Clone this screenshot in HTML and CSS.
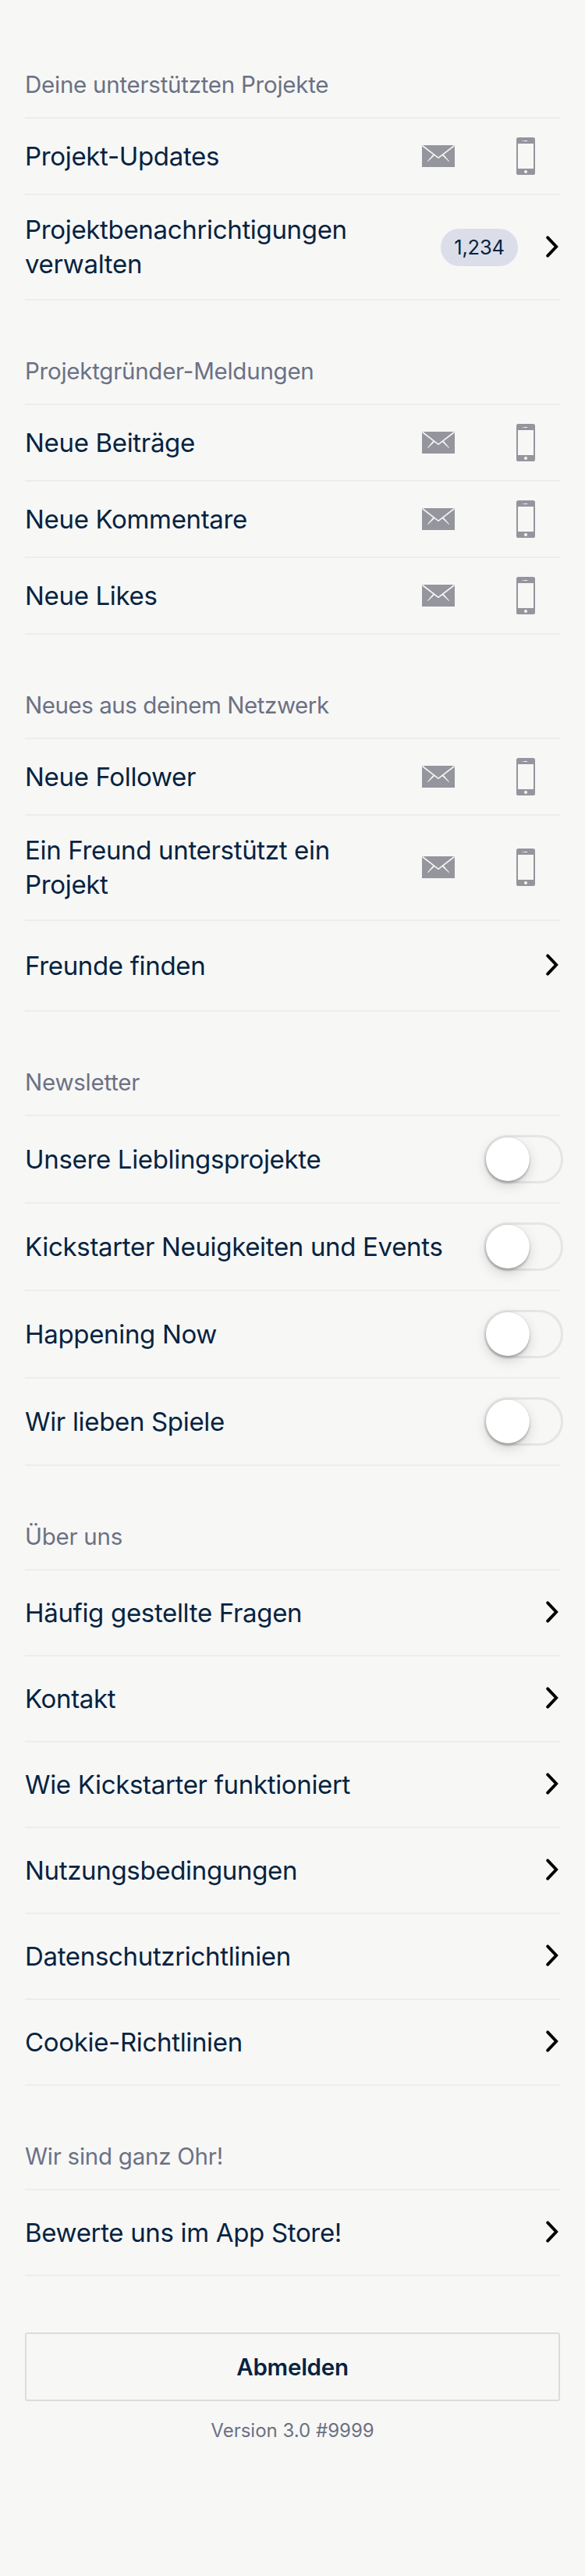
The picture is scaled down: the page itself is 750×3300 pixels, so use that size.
FILE: index.html
```html
<!DOCTYPE html>
<html lang="de">
<head>
<meta charset="utf-8">
<title>Einstellungen</title>
<link rel="stylesheet" href="styles.css">
</head>
<body>
<svg class="defs" width="0" height="0" aria-hidden="true">
  <symbol id="mail" viewBox="0 0 42 28">
    <path fill="#95959e" d="M0 0H42V28H0Z"/>
    <path fill="none" stroke="#f7f7f6" stroke-width="1.700" d="M.5 .5 21 16.300 41.500 .5"/>
    <path fill="#f7f7f6" d="M14.200 12 15.900 13.200 7.600 21 7 20.500ZM27.800 12 26.100 13.200 34.400 21 35 20.500Z"/>
  </symbol>
  <symbol id="phone" viewBox="0 0 24 48">
    <rect width="24" height="48" rx="2.600" fill="#95959e"/>
    <rect x="2" y="8" width="20" height="32" fill="#f7f7f6"/>
    <rect x="10" y="4" width="4" height="1" fill="#f7f7f6"/>
    <rect x="8" y="4" width="1" height="1" fill="#f7f7f6"/>
    <circle cx="12" cy="44" r="2" fill="#f7f7f6"/>
  </symbol>
  <symbol id="chevron" viewBox="0 0 16 28">
    <path fill="none" stroke="#000" stroke-width="3.900" stroke-linecap="round" d="M2.200 2.300 13.200 14 2.200 25.700"/>
  </symbol>
</svg>
<main class="settings">
  <section>
    <h2 class="heading">Deine unterstützten Projekte</h2>
    <div class="row"><span class="label">Projekt-Updates</span><svg class="mail"><use href="#mail"/></svg><svg class="phone"><use href="#phone"/></svg></div>
    <div class="row row-double"><span class="label">Projektbenachrichtigungen<br>verwalten</span><span class="badge">1,234</span><svg class="chevron"><use href="#chevron"/></svg></div>
  </section>
  <section>
    <h2 class="heading">Projektgründer-Meldungen</h2>
    <div class="row"><span class="label">Neue Beiträge</span><svg class="mail"><use href="#mail"/></svg><svg class="phone"><use href="#phone"/></svg></div>
    <div class="row"><span class="label">Neue Kommentare</span><svg class="mail"><use href="#mail"/></svg><svg class="phone"><use href="#phone"/></svg></div>
    <div class="row"><span class="label">Neue Likes</span><svg class="mail"><use href="#mail"/></svg><svg class="phone"><use href="#phone"/></svg></div>
  </section>
  <section>
    <h2 class="heading heading-tight">Neues aus deinem Netzwerk</h2>
    <div class="row"><span class="label">Neue Follower</span><svg class="mail"><use href="#mail"/></svg><svg class="phone"><use href="#phone"/></svg></div>
    <div class="row row-double"><span class="label">Ein Freund unterstützt ein<br>Projekt</span><svg class="mail"><use href="#mail"/></svg><svg class="phone"><use href="#phone"/></svg></div>
    <div class="row row-friends"><span class="label">Freunde finden</span><svg class="chevron"><use href="#chevron"/></svg></div>
  </section>
  <section>
    <h2 class="heading">Newsletter</h2>
    <div class="row row-switch"><span class="label">Unsere Lieblingsprojekte</span><span class="switch"><span class="knob"></span></span></div>
    <div class="row row-switch"><span class="label">Kickstarter Neuigkeiten und Events</span><span class="switch"><span class="knob"></span></span></div>
    <div class="row row-switch"><span class="label">Happening Now</span><span class="switch"><span class="knob"></span></span></div>
    <div class="row row-switch"><span class="label">Wir lieben Spiele</span><span class="switch"><span class="knob"></span></span></div>
  </section>
  <section>
    <h2 class="heading">Über uns</h2>
    <div class="row row-link"><span class="label">Häufig gestellte Fragen</span><svg class="chevron"><use href="#chevron"/></svg></div>
    <div class="row row-link"><span class="label">Kontakt</span><svg class="chevron"><use href="#chevron"/></svg></div>
    <div class="row row-link"><span class="label">Wie Kickstarter funktioniert</span><svg class="chevron"><use href="#chevron"/></svg></div>
    <div class="row row-link"><span class="label">Nutzungsbedingungen</span><svg class="chevron"><use href="#chevron"/></svg></div>
    <div class="row row-link"><span class="label">Datenschutzrichtlinien</span><svg class="chevron"><use href="#chevron"/></svg></div>
    <div class="row row-link"><span class="label">Cookie-Richtlinien</span><svg class="chevron"><use href="#chevron"/></svg></div>
  </section>
  <section>
    <h2 class="heading">Wir sind ganz Ohr!</h2>
    <div class="row row-link"><span class="label">Bewerte uns im App Store!</span><svg class="chevron"><use href="#chevron"/></svg></div>
  </section>
  <button class="logout" type="button">Abmelden</button>
  <p class="version">Version 3.0 #9999</p>
</main>
</body>
</html>
```
FILE: styles.css
```css
* { box-sizing: border-box; }

body {
  margin: 0;
  background: #f7f7f6;
  color: #062340;
  font-family: Inter, "Liberation Sans", sans-serif;
}

.defs { display: block; height: 0; }

.settings {
  min-height: 3300px;
  padding: 18px 32px 0;
}

.heading {
  height: 134px;
  margin: 0;
  padding-top: 72px;
  border-bottom: 2px solid #ededec;
  color: #6b7184;
  font-size: 29.5px;
  font-weight: 400;
  line-height: 36px;
  letter-spacing: -0.25px;
  white-space: nowrap;
}

.heading-tight { letter-spacing: -0.45px; }

.row {
  display: flex;
  align-items: center;
  height: 98px;
  border-bottom: 2px solid #ededec;
}

.row-double { height: 135px; padding-bottom: 1px; }
.row-friends { height: 116px; }
.row-switch { height: 112px; }
.row-link { height: 110px; }

.label {
  flex: 1;
  font-size: 33px;
  line-height: 44px;
  letter-spacing: -0.33px;
  white-space: nowrap;
}

.mail { width: 42px; height: 28px; margin-right: 79px; }
.phone { width: 24px; height: 48px; margin-right: 32px; }
.chevron { width: 16px; height: 28px; margin-right: 2px; }
.row-friends .chevron,
.row-link .chevron { margin-bottom: 2px; }

.badge {
  width: 99px;
  height: 48px;
  margin: 2px 36px 0 0;
  border-radius: 24px;
  background: #dbdee8;
  font-size: 25.5px;
  line-height: 48px;
  letter-spacing: -0.2px;
  text-align: center;
}

.switch {
  width: 102px;
  height: 62px;
  margin-right: -4px;
  border: 3px solid #e5e5e5;
  border-radius: 31px;
}

.knob {
  display: block;
  width: 56px;
  height: 56px;
  border-radius: 50%;
  background: #fff;
  box-shadow: 0 6px 16px rgba(0, 0, 0, .15), 0 3px 3px rgba(0, 0, 0, .2), 0 0 0 1px rgba(0, 0, 0, .05);
}

.logout {
  display: block;
  width: 100%;
  height: 88px;
  margin: 72px 0 0;
  border: 2px solid #dcdcdb;
  border-radius: 3px;
  background: transparent;
  color: inherit;
  font: 600 29.5px/40px Inter, "Liberation Sans", sans-serif;
  letter-spacing: -0.25px;
}

.version {
  margin: 22px 0 0;
  color: #6b7184;
  font-size: 24px;
  line-height: 32px;
  text-align: center;
}
```
